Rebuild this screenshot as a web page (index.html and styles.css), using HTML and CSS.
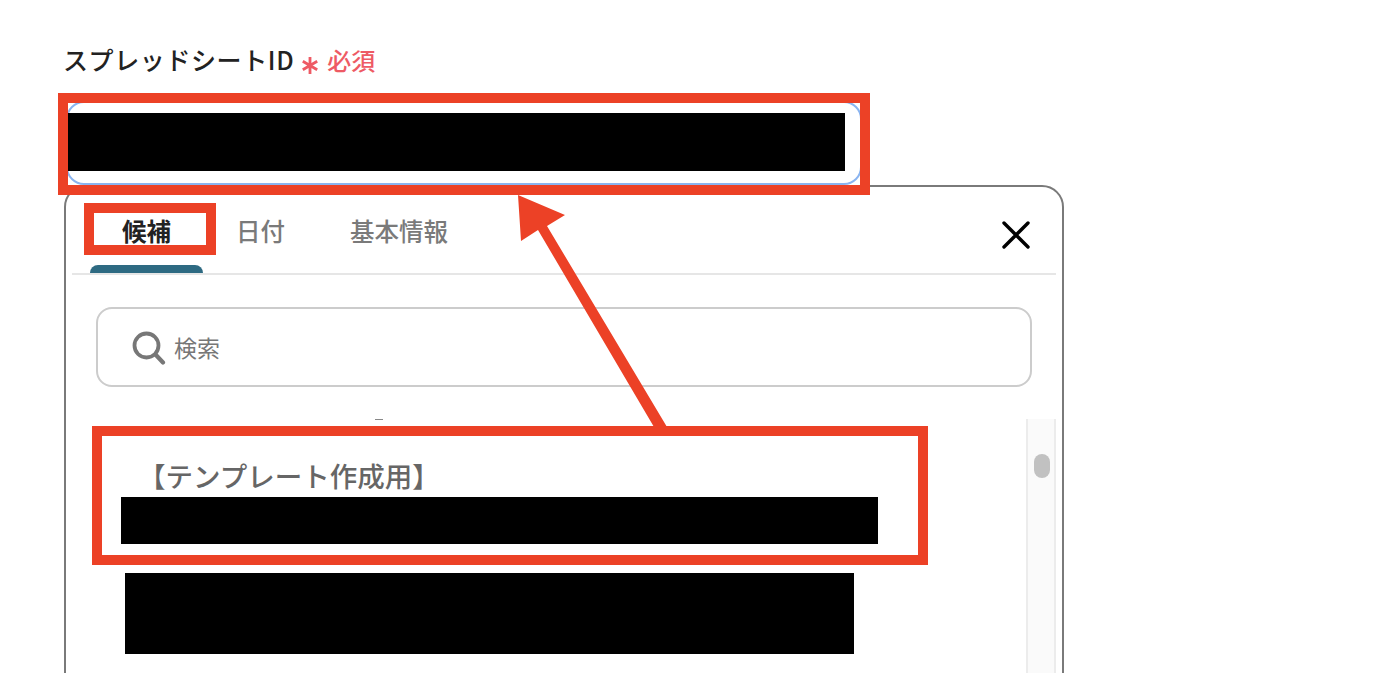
FILE: index.html
```html
<!DOCTYPE html>
<html lang="ja">

<head>
    <meta charset="UTF-8">
    <title>スプレッドシートID</title>
    <link rel="stylesheet" href="styles.css">
</head>

<body>
    <div class="page">
        <div class="field-label">
            <span class="label-text">スプレッドシートID</span>
            <svg class="required-mark" width="16" height="17" viewBox="0 0 16 17">
                <path d="M8 0V17M0.8 4.2L15.2 12.8M15.2 4.2L0.8 12.8" fill="none" stroke="#ee5a64" stroke-width="2.8"/>
            </svg>
            <span class="required-text">必須</span>
        </div>

        <div class="field-input">
            <div class="mask mask-input"></div>
        </div>

        <div class="card">
            <div class="tabs">
                <div class="tab tab-active">
                    <div class="tab-name">候補</div>
                    <div class="tab-bar"></div>
                </div>
                <div class="tab tab-date">
                    <div class="tab-name">日付</div>
                </div>
                <div class="tab tab-info">
                    <div class="tab-name">基本情報</div>
                </div>
                <svg class="close-icon" width="30" height="28" viewBox="0 0 30 28">
                    <path d="M3 2L27 26M27 2L3 26" fill="none" stroke="#000" stroke-width="3.4" stroke-linecap="round"/>
                </svg>
            </div>

            <div class="search">
                <svg class="search-icon" width="34" height="34" viewBox="0 0 34 34">
                    <circle cx="14.5" cy="14.5" r="12" fill="none" stroke="#777" stroke-width="3.8"/>
                    <path d="M23.5 23.5L31 31.5" fill="none" stroke="#777" stroke-width="4.2" stroke-linecap="round"/>
                </svg>
                <span class="search-text">検索</span>
            </div>

            <div class="list-area">
                <div class="list">
                    <div class="clip-mark"></div>
                    <div class="item-title">【テンプレート作成用】</div>
                    <div class="mask mask-first"></div>
                    <div class="mask mask-second"></div>
                </div>
                <div class="scrollbar">
                    <div class="scroll-thumb"></div>
                </div>
            </div>
        </div>

        <!-- annotations drawn on top of the screenshot -->
        <div class="note-box note-input"></div>
        <div class="note-box note-tab"></div>
        <div class="note-box note-item"></div>
        <svg class="note-arrow" width="1378" height="673" viewBox="0 0 1378 673">
            <polygon points="518,195 565,215 547,226 667,427 654,427 538,230 521,241" fill="#ec4126"/>
        </svg>
    </div>
</body>

</html>
```

FILE: styles.css
```css
html,
body {
    width: 100%;
    height: 100%;
    padding: 0;
    margin: 0;
    overflow: hidden;
    background: #fff;
}

.page {
    position: relative;
    box-sizing: border-box;
    height: 673px;
    padding: 44px 0 0 64px;
    overflow: hidden;
    font-family: "Noto Sans CJK JP", "Noto Sans", sans-serif;
}

.field-label {
    display: flex;
    align-items: center;
    height: 30px;
}

.label-text {
    margin-left: -1px;
    font-size: 25px;
    font-weight: 500;
    letter-spacing: 0.6px;
    color: #222;
    white-space: nowrap;
}

.required-mark {
    margin: 12px 0 0 8px;
}

.required-text {
    margin-left: 9px;
    font-size: 24px;
    font-weight: 500;
    color: #ee5a64;
}

.field-input {
    box-sizing: border-box;
    width: 796px;
    height: 84px;
    margin: 27px 0 0 2px;
    padding: 10px 0 0;
    border: 2px solid #8ab4f0;
    border-radius: 18px;
    background: #fff;
}

.mask {
    background: #000;
}

.mask-input {
    width: 777px;
    height: 58px;
}

.card {
    box-sizing: border-box;
    width: 1000px;
    height: 540px;
    padding: 0 6px;
    border: 2px solid #7a7a7a;
    border-radius: 22px;
    background: #fff;
}

.tabs {
    display: flex;
    align-items: flex-start;
    padding-left: 18px;
    border-bottom: 2px solid #e6e6e6;
}

.tab {
    height: 86px;
    padding-top: 29px;
    box-sizing: border-box;
}

.tab-name {
    font-size: 24.5px;
    font-weight: 500;
    line-height: 30px;
    text-align: center;
    color: #7a7a7a;
    white-space: nowrap;
}

.tab-active {
    width: 113px;
}

.tab-active .tab-name {
    font-weight: 700;
    color: #222;
}

.tab-bar {
    height: 8px;
    margin-top: 19px;
    border-radius: 8px 8px 0 0;
    background: #2e6a82;
}

.tab-date {
    padding-left: 33px;
    padding-right: 32px;
}

.tab-info {
    padding-left: 33px;
}

.close-icon {
    margin: 34px 25px 0 auto;
}

.search {
    display: flex;
    align-items: center;
    box-sizing: border-box;
    height: 80px;
    margin: 32px 24px 0;
    padding-left: 34px;
    border: 2px solid #ccc;
    border-radius: 16px;
}

.search-icon {
    margin-top: 2px;
}

.search-text {
    margin-left: 8px;
    font-size: 23px;
    color: #777;
}

.list-area {
    display: flex;
    height: 300px;
    margin-top: 32px;
}

.list {
    flex: 1;
}

.clip-mark {
    width: 8px;
    height: 1px;
    margin-left: 303px;
    background: #888;
}

.item-title {
    margin: 38px 0 0 66px;
    font-size: 27.5px;
    font-weight: 500;
    line-height: 34px;
    color: #666;
    white-space: nowrap;
}

.mask-first {
    width: 757px;
    height: 47px;
    margin: 5px 0 0 49px;
}

.mask-second {
    width: 729px;
    height: 81px;
    margin: 29px 0 0 53px;
}

.scrollbar {
    box-sizing: border-box;
    width: 30px;
    padding: 35px 0 0 6px;
    border-left: 2px solid #ececec;
    border-right: 2px solid #ececec;
    background: #fafafa;
}

.scroll-thumb {
    width: 16px;
    height: 24px;
    border-radius: 8px;
    background: #c1c1c1;
}

.note-box {
    position: absolute;
    box-sizing: border-box;
    border: 10px solid #ec4126;
}

.note-input {
    left: 58px;
    top: 93px;
    width: 812px;
    height: 102px;
}

.note-tab {
    left: 84px;
    top: 203px;
    width: 132px;
    height: 52px;
}

.note-item {
    left: 92px;
    top: 426px;
    width: 836px;
    height: 139px;
}

.note-arrow {
    position: absolute;
    left: 0;
    top: 0;
}
```
